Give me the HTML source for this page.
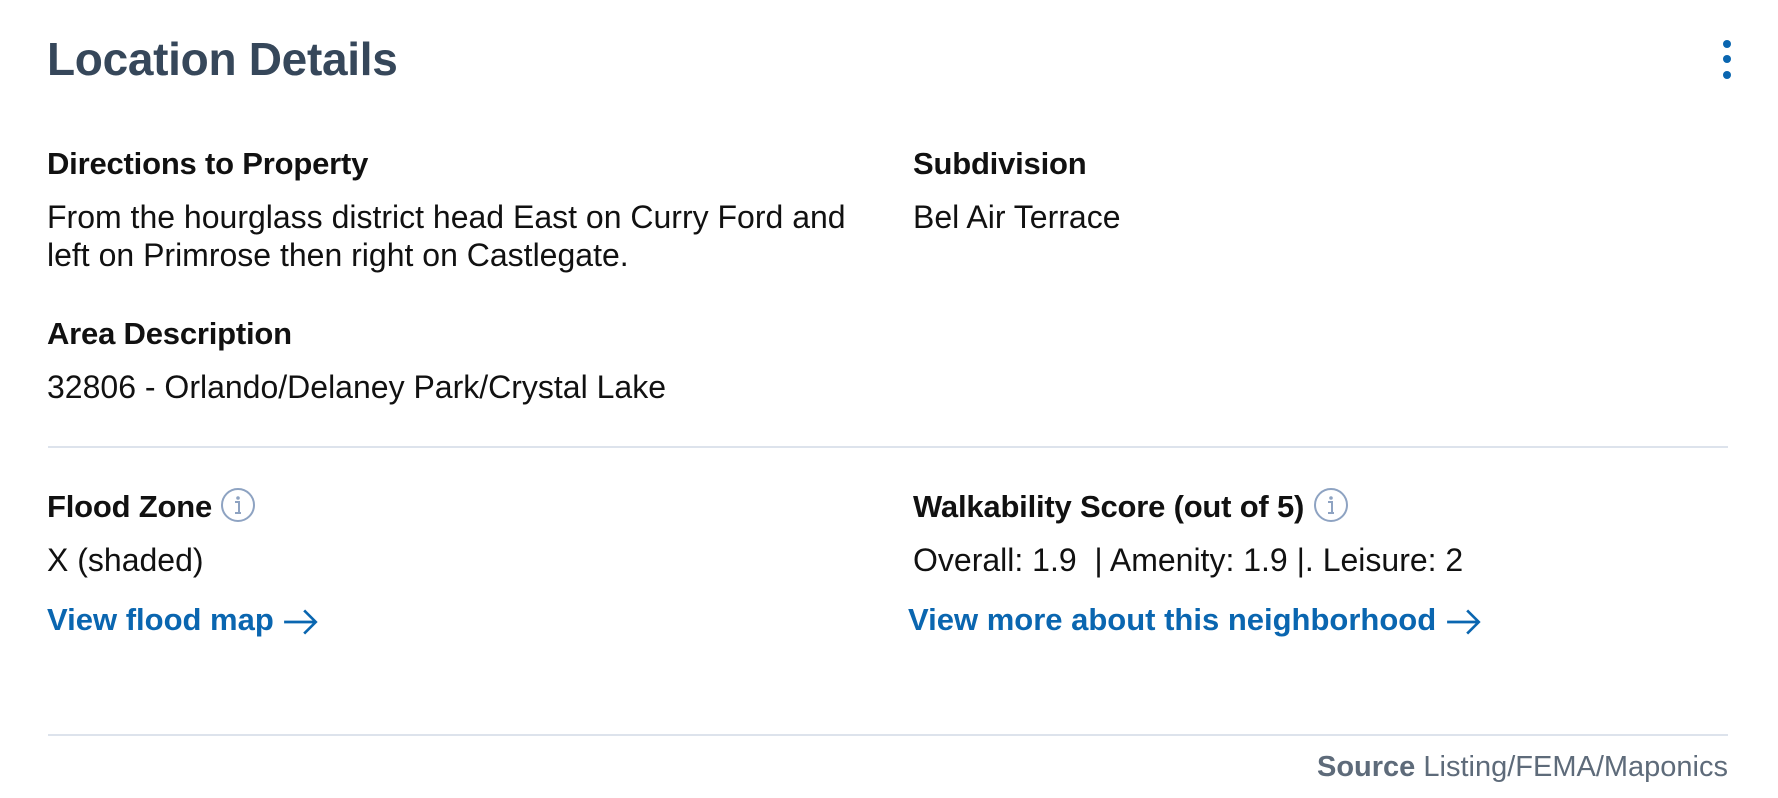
<!DOCTYPE html>
<html><head><meta charset="utf-8"><style>
*{margin:0;padding:0;box-sizing:border-box}
body{width:1778px;height:798px;background:#fff;font-family:"Liberation Sans",Arial,sans-serif;color:#111;position:relative;overflow:hidden}
.a{position:absolute;white-space:nowrap;line-height:1}
h1{position:absolute;left:47px;top:36px;font-size:46px;font-weight:bold;color:#36475a;line-height:1;letter-spacing:-0.3px}
.h{font-size:31px;font-weight:bold;letter-spacing:-0.2px}
.t{font-size:32px}
.l{font-size:31px;font-weight:bold;color:#0a66b0}
.hr{position:absolute;left:48px;width:1680px;height:2px;background:#dde3ec}
.dot{position:absolute;left:1723px;width:8px;height:8px;border-radius:50%;background:#0a66b0}
svg{vertical-align:middle}
</style></head><body>
<h1>Location Details</h1>
<div class="dot" style="top:40px"></div><div class="dot" style="top:55px"></div><div class="dot" style="top:71px"></div>

<div class="a h" style="left:47px;top:148px">Directions to Property</div>
<div class="a t" style="left:47px;line-height:38px;top:198px">From the hourglass district head East on Curry Ford and<br>left on Primrose then right on Castlegate.</div>
<div class="a h" style="left:47px;top:318px">Area Description</div>
<div class="a t" style="left:47px;top:371px">32806 - Orlando/Delaney Park/Crystal Lake</div>

<div class="a h" style="left:913px;top:148px">Subdivision</div>
<div class="a t" style="left:913px;top:201px">Bel Air Terrace</div>

<div class="hr" style="top:446px"></div>

<div class="a h" style="left:47px;top:491px">Flood Zone <svg width="36" height="36" viewBox="0 0 36 36" style="margin-top:-8px"><circle cx="18" cy="18" r="16" fill="none" stroke="#8ea3c2" stroke-width="2"/><circle cx="18" cy="11" r="1.8" fill="#8ea3c2"/><path d="M15 15h4v11M15 26h6" stroke="#8ea3c2" stroke-width="2" fill="none"/></svg></div>
<div class="a t" style="left:47px;top:544px">X (shaded)</div>
<div class="a l" style="left:47px;top:604px">View flood map <svg width="38" height="30" viewBox="0 0 36 28"><path d="M2 14h30M21 3l11 11-11 11" stroke="#0a66b0" stroke-width="2.5" fill="none"/></svg></div>

<div class="a h" style="left:913px;top:491px">Walkability Score (out of 5) <svg width="36" height="36" viewBox="0 0 36 36" style="margin-top:-8px"><circle cx="18" cy="18" r="16" fill="none" stroke="#8ea3c2" stroke-width="2"/><circle cx="18" cy="11" r="1.8" fill="#8ea3c2"/><path d="M15 15h4v11M15 26h6" stroke="#8ea3c2" stroke-width="2" fill="none"/></svg></div>
<div class="a t" style="left:913px;top:544px">Overall: 1.9&nbsp; | Amenity: 1.9 |. Leisure: 2</div>
<div class="a l" style="left:908px;top:604px">View more about this neighborhood <svg width="38" height="30" viewBox="0 0 36 28"><path d="M2 14h30M21 3l11 11-11 11" stroke="#0a66b0" stroke-width="2.5" fill="none"/></svg></div>

<div class="hr" style="top:734px"></div>
<div class="a" style="right:50px;top:753px;font-size:29px;color:#5e6b7a"><b>Source</b> Listing/FEMA/Maponics</div>
</body></html>
